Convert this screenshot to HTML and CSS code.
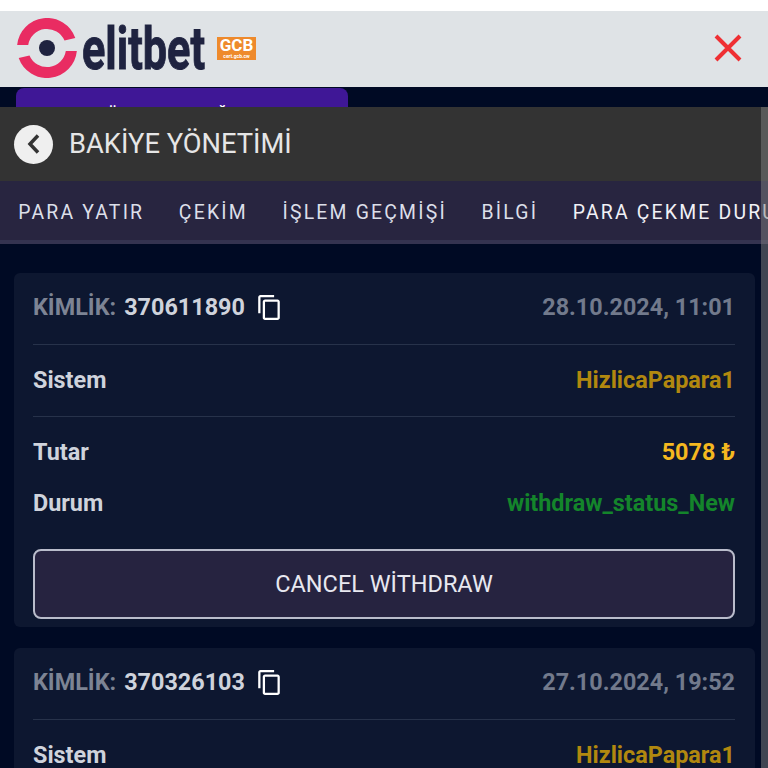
FILE: index.html
```html
<!DOCTYPE html>
<html lang="tr">

<head>
  <meta charset="UTF-8">
  <meta name="viewport" content="width=device-width, initial-scale=1.0">
  <title>Bakiye Yönetimi</title>
  <link rel="stylesheet" href="styles.css">
</head>

<body>
  <div class="topline"></div>
  <header class="site-header">
    <div class="brand">
      <svg class="brand-mark" viewBox="1 1 60 60" width="60" height="60">
        <path fill="#e92c62" d="M1.15 28A30 30 0 0 1 59.3 21L48.5 23.6A19 19 0 0 0 12.2 28Z" />
        <path fill="#e92c62" d="M60.85 34A30 30 0 0 1 2.7 41L13.5 38.4A19 19 0 0 0 49.8 34Z" />
        <circle cx="31" cy="31" r="8" fill="#1f2340" />
      </svg>
      <svg class="brand-name" viewBox="0 0 126 48" width="126" height="48">
        <text x="0" y="45" textLength="123" lengthAdjust="spacingAndGlyphs">elitbet</text>
      </svg>
      <div class="gcb">
        <span class="gcb-name">GCB</span>
        <span class="gcb-cert">cert.gcb.cw</span>
      </div>
    </div>
    <svg class="close" viewBox="0 0 28 28" width="28" height="28">
      <path d="M2 2L26 26M26 2L2 26" />
    </svg>
  </header>

  <div class="promo-band">
    <div class="promo">SON ÜYE HESAP DOĞRULAMA</div>
  </div>

  <div class="title-bar">
    <div class="back">
      <svg viewBox="0 0 14 20" width="14" height="20">
        <path d="M11 1.5L3 10L11 18.5" />
      </svg>
    </div>
    <h1>BAKİYE YÖNETİMİ</h1>
  </div>

  <nav class="tabs">
    <a>PARA YATIR</a>
    <a>ÇEKİM</a>
    <a>İŞLEM GEÇMİŞİ</a>
    <a>BİLGİ</a>
    <a class="active">PARA ÇEKME DURUMU</a>
  </nav>

  <main class="list">
    <section class="card">
      <div class="row row-head">
        <div class="id">
          <span class="id-label">KİMLİK:</span>
          <span>370611890</span>
          <svg class="copy" viewBox="2 1 19 22" width="22" height="25">
            <path d="M16 1H4c-1.1 0-2 .9-2 2v14h2V3h12V1zm3 4H8c-1.1 0-2 .9-2 2v14c0 1.1.9 2 2 2h11c1.1 0 2-.9 2-2V7c0-1.1-.9-2-2-2zm0 16H8V7h11v14z" />
          </svg>
        </div>
        <span class="date">28.10.2024, 11:01</span>
      </div>
      <div class="row row-system">
        <span>Sistem</span>
        <span class="system">HizlicaPapara1</span>
      </div>
      <div class="row row-amount">
        <span>Tutar</span>
        <span class="amount">5078 ₺</span>
      </div>
      <div class="row row-status">
        <span>Durum</span>
        <span class="status">withdraw_status_New</span>
      </div>
      <button class="cancel">CANCEL WİTHDRAW</button>
    </section>

    <section class="card">
      <div class="row row-head">
        <div class="id">
          <span class="id-label">KİMLİK:</span>
          <span>370326103</span>
          <svg class="copy" viewBox="2 1 19 22" width="22" height="25">
            <path d="M16 1H4c-1.1 0-2 .9-2 2v14h2V3h12V1zm3 4H8c-1.1 0-2 .9-2 2v14c0 1.1.9 2 2 2h11c1.1 0 2-.9 2-2V7c0-1.1-.9-2-2-2zm0 16H8V7h11v14z" />
          </svg>
        </div>
        <span class="date">27.10.2024, 19:52</span>
      </div>
      <div class="row row-system">
        <span>Sistem</span>
        <span class="system">HizlicaPapara1</span>
      </div>
    </section>
  </main>

  <div class="scrollbar"></div>
</body>

</html>
```

FILE: styles.css
```css
* {
  box-sizing: border-box;
}

html,
body {
  height: 768px;
  margin: 0;
  overflow: hidden;
}

body {
  position: relative;
  background: #000a24;
  font-family: Roboto, "Liberation Sans", sans-serif;
  color: #d5d9e2;
}

.topline {
  height: 11px;
  background: #fff;
}

.site-header {
  display: flex;
  align-items: center;
  justify-content: space-between;
  height: 76px;
  padding: 0 26px 2px 17px;
  background: #dfe3e6;
}

.brand {
  display: flex;
  align-items: center;
}

.brand-mark {
  flex: none;
}

.brand-name {
  flex: none;
  margin-left: 5px;
}

.brand-name text {
  font-family: Roboto, sans-serif;
  font-size: 60px;
  font-weight: 700;
  fill: #1f2340;
  stroke: #1f2340;
  stroke-width: 1;
}

.gcb {
  display: flex;
  flex-direction: column;
  align-items: center;
  width: 39px;
  height: 23px;
  margin-left: 9px;
  background: #ee8a2c;
  color: #fff;
  font-weight: 700;
}

.gcb-name {
  font-size: 17px;
  line-height: 17px;
}

.gcb-cert {
  font-size: 5px;
  line-height: 5px;
}

.close path {
  fill: none;
  stroke: #ef2f33;
  stroke-width: 4;
}

.promo-band {
  height: 20px;
  padding: 1px 0 0 16px;
  overflow: hidden;
}

.promo {
  width: 332px;
  height: 40px;
  padding-top: 17px;
  border-radius: 8px 8px 0 0;
  background: #3f1796;
  color: #fff;
  font-size: 16px;
  font-weight: 500;
  line-height: 20px;
  text-align: center;
}

.title-bar {
  display: flex;
  align-items: center;
  height: 74px;
  padding-left: 14px;
  background: #333;
}

.back {
  display: flex;
  align-items: center;
  justify-content: center;
  width: 39px;
  height: 39px;
  border-radius: 50%;
  background: #efefef;
}

.back path {
  fill: none;
  stroke: #333;
  stroke-width: 3.5;
}

.title-bar h1 {
  margin: 0 0 0 16px;
  color: #e6e6e6;
  font-size: 27.3px;
  font-weight: 400;
}

.tabs {
  display: flex;
  height: 63px;
  padding-left: 1px;
  overflow: hidden;
  border-bottom: 4px solid #343350;
  background: #282540;
}

.tabs a {
  flex: none;
  height: 63px;
  padding: 0 17.3px;
  color: #dcdfe9;
  font-size: 19.4px;
  letter-spacing: 2.2px;
  line-height: 64px;
}

.tabs a.active {
  border-bottom: 4px solid #b02a6c;
  color: #f1f1f6;
}

.list {
  display: flex;
  flex-direction: column;
  gap: 21px;
  padding: 29px 13px 0 14px;
}

.card {
  flex: none;
  padding: 0 20px 8px 19px;
  border-radius: 6px;
  background: #0d1730;
}

.row {
  display: flex;
  align-items: center;
  justify-content: space-between;
  font-size: 23.4px;
  font-weight: 700;
  color: #cfd3dc;
}

.row-head,
.row-system {
  height: 72px;
  border-bottom: 1px solid #27324a;
}

.row-head {
  padding-bottom: 3px;
}

.row-system {
  padding-bottom: 2px;
}

.row-amount {
  height: 71px;
  padding-bottom: 1px;
}

.row-status {
  height: 30px;
  margin-bottom: 31px;
}

.id {
  display: flex;
  align-items: center;
  gap: 8px;
}

.id-label {
  color: #7d8494;
}

.copy {
  margin-left: 5px;
  fill: #fff;
}

.date {
  color: #727a8c;
}

.system {
  color: #b1880f;
}

.amount {
  color: #f5b81f;
}

.status {
  color: #14852b;
}

.cancel {
  display: block;
  width: 100%;
  height: 70px;
  border: 2px solid #b9bccb;
  border-radius: 8px;
  background: #262340;
  color: #e8e8f0;
  font-family: Roboto, "Liberation Sans", sans-serif;
  font-size: 23.5px;
}

.scrollbar {
  position: absolute;
  top: 107px;
  right: 0;
  bottom: 0;
  width: 7px;
  background: rgba(128, 128, 128, 0.5);
}
```
